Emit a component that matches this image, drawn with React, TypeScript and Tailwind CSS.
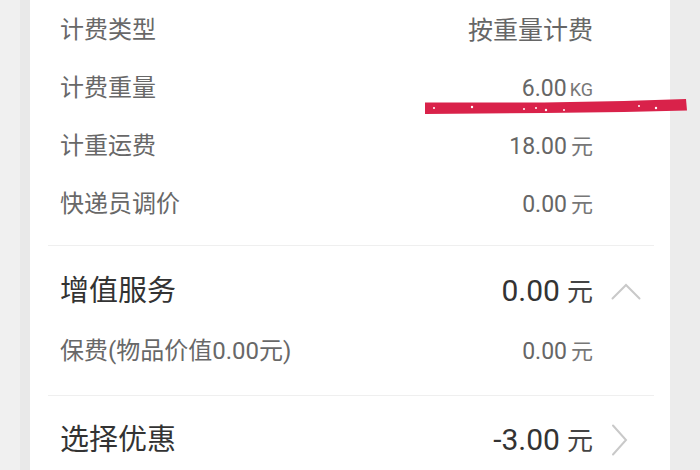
import React from 'react'

const font = { fontFamily: 'Roboto, "Noto Sans CJK SC", sans-serif' }

type Row = { label: string; value: string; unit: string }

const feeRows: Row[] = [
  { label: '计费类型', value: '按重量计费', unit: '' },
  { label: '计费重量', value: '6.00', unit: 'KG' },
  { label: '计重运费', value: '18.00', unit: '元' },
  { label: '快递员调价', value: '0.00', unit: '元' },
]

const ChevronUp = () => (
  <svg width="30" height="17" viewBox="0 0 30 17" fill="none">
    <path d="M1.5 15.5 L15 2 L28.5 15.5" stroke="#c9c9c9" strokeWidth="2" strokeLinecap="round" />
  </svg>
)

const ChevronRight = () => (
  <svg width="17" height="32" viewBox="0 0 17 32" fill="none">
    <path d="M2 1.5 L15 16 L2 30.5" stroke="#c9c9c9" strokeWidth="2" strokeLinecap="round" />
  </svg>
)

const SmallRow = ({ label, value, unit, h }: Row & { h: string }) => (
  <div className={`flex items-center justify-between pl-[30px] pr-[28px] ${h}`}>
    <span className="text-[24px] text-[#686868] leading-none">{label}</span>
    <div className="flex items-baseline pr-[49px]">
      <span className={`${unit ? 'text-[23px]' : 'text-[25px]'} text-[#666] leading-none`}>{value}</span>
      {unit === 'KG' && <span className="ml-[3px] text-[18px] text-[#777] leading-none">KG</span>}
      {unit === '元' && <span className="ml-[4px] text-[22px] text-[#777] leading-none">元</span>}
    </div>
  </div>
)

const HeaderRow = ({
  label,
  value,
  icon,
  h,
}: {
  label: string
  value: string
  icon: React.ReactNode
  h: string
}) => (
  <div className={`flex items-center justify-between pl-[30px] pr-[28px] ${h}`}>
    <span className="text-[29px] text-[#333] leading-none">{label}</span>
    <div className="flex items-center">
      <div className="flex items-baseline">
        <span className="text-[30px] text-[#333] leading-none">{value}</span>
        <span className="ml-[7px] text-[26px] text-[#444] leading-none">元</span>
      </div>
      <div className="w-[49px] pl-[18px] flex items-center">{icon}</div>
    </div>
  </div>
)

const Divider = () => <div className="ml-[18px] mr-[16px] h-[2px] bg-[#efefef]" />

export default function App() {
  return (
    <div className="w-[700px] h-[470px] flex overflow-hidden bg-[#ededed] relative" style={font}>
      <div className="w-[30px] flex">
        <div className="w-[20px] bg-[#f0f0f0]" />
        <div className="w-[10px] bg-[#e9e9e9]" />
      </div>
      <div className="w-[640px] bg-white flex flex-col">
        <div className="pt-[1px] pb-[12px]">
          {feeRows.map((r) => (
            <SmallRow key={r.label} {...r} h="h-[58px]" />
          ))}
        </div>
        <Divider />
        <div className="pt-[14px] pb-[15px]">
          <HeaderRow label="增值服务" value="0.00" icon={<ChevronUp />} h="h-[62px]" />
          <SmallRow label="保费(物品价值0.00元)" value="0.00" unit="元" h="h-[58px]" />
        </div>
        <Divider />
        <div className="pt-[14px]">
          <HeaderRow label="选择优惠" value="-3.00" icon={<ChevronRight />} h="h-[60px]" />
        </div>
      </div>
      <div className="w-[30px] bg-[#ececec]" />

      {/* red marker stroke over the weight row */}
      <svg className="absolute left-[424px] top-[96px]" width="264" height="22" viewBox="0 0 264 22">
        <path
          d="M1 6.5 L120 6.5 L200 5 L262 3 L263 14.5 L200 16 L120 17 L1 18 Z"
          fill="#d9224a"
        />
        <circle cx="10" cy="12" r="1" fill="#fff" />
        <circle cx="48" cy="11" r="1.2" fill="#fff" />
        <circle cx="100" cy="13" r="1" fill="#fff" />
        <circle cx="112" cy="12" r="1" fill="#fff" />
        <circle cx="122" cy="14" r="1.2" fill="#fff" />
        <circle cx="140" cy="14" r="1" fill="#fff" />
        <circle cx="215" cy="10" r="1" fill="#fff" />
        <circle cx="232" cy="12" r="1.2" fill="#fff" />
      </svg>
    </div>
  )
}
